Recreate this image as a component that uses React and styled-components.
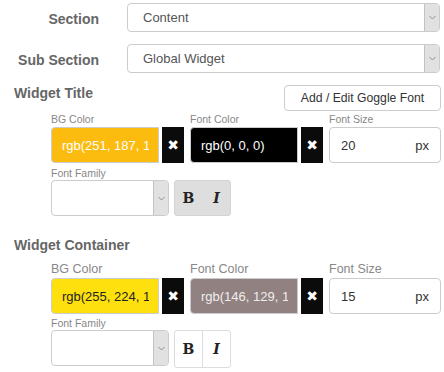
import React from 'react'
import styled, { createGlobalStyle } from 'styled-components'

const GlobalStyle = createGlobalStyle`
  body {
    margin: 0;
    background: #fff;
    font-family: "Liberation Sans", Arial, sans-serif;
  }
`

const Page = styled.div`
  width: 444px;
  padding: 3px 0 0 14px;
  box-sizing: border-box;
`

const FormRow = styled.div`
  display: grid;
  grid-template-columns: 85px 313px;
  column-gap: 28px;
  align-items: center;
  margin-bottom: 12px;
`

const RowLabel = styled.label`
  text-align: right;
  font-size: 14px;
  font-weight: bold;
  color: #666;
  padding-top: 2px;
`

const SelectBox = styled.div`
  display: flex;
  height: ${p => p.$h || 29}px;
  width: ${p => (p.$w ? p.$w + 'px' : 'auto')};
  box-sizing: border-box;
  border: 1px solid #ccc;
  border-radius: 4px;
  overflow: hidden;
  background: #fff;
`

const SelectValue = styled.div`
  flex: 1;
  padding-left: 15px;
  font-size: 13px;
  color: #555;
  display: flex;
  align-items: center;
`

const Arrow = styled.div`
  width: 14px;
  background: #e1e1e1;
  border-left: 1px solid #c2c2c2;
  display: flex;
  align-items: center;
  justify-content: center;
`

const SectionHead = styled.div`
  display: flex;
  justify-content: space-between;
  align-items: flex-start;
  width: 427px;
  margin-top: ${p => p.$top}px;
`

const SectionTitle = styled.h3`
  margin: 0;
  font-size: 14px;
  line-height: 16px;
  font-weight: bold;
  color: #666;
`

const GoogleButton = styled.button`
  width: 157px;
  height: 26px;
  border: 1px solid #ccc;
  border-radius: 4px;
  background: #fff;
  font-family: "Liberation Sans", Arial, sans-serif;
  font-size: 12.2px;
  color: #333;
  padding: 0;
`

const Fields = styled.div`
  margin-left: 37px;
  margin-top: ${p => p.$top}px;
`

const ColorGrid = styled.div`
  display: grid;
  grid-template-columns: 133px 133px 112px;
  column-gap: 6px;
`

const FieldLabel = styled.div`
  font-size: ${p => p.$size}px;
  line-height: ${p => p.$lh}px;
  color: #888;
  margin-bottom: 1px;
  white-space: nowrap;
`

const InputGroup = styled.div`
  display: flex;
  height: 36px;
`

const ColorInput = styled.input`
  flex: 1;
  min-width: 0;
  box-sizing: border-box;
  height: 36px;
  border: 1px solid #ccc;
  border-radius: 4px 0 0 4px;
  background: ${p => p.$bg};
  color: ${p => p.$fg};
  font-family: "Liberation Sans", Arial, sans-serif;
  font-size: 13px;
  padding: 0 9px 0 10px;
  outline: none;
`

const ClearButton = styled.div`
  width: 22px;
  margin-left: 3px;
  background: #0b0b0b;
  color: #fff;
  font-family: "DejaVu Sans", sans-serif;
  font-size: 14px;
  display: flex;
  align-items: center;
  justify-content: center;
`

const SizeInput = styled.div`
  height: 36px;
  box-sizing: border-box;
  border: 1px solid #ccc;
  border-radius: 4px;
  display: flex;
  align-items: center;
  justify-content: space-between;
  padding: 0 11px 0 11px;
  font-size: 13px;
  color: #333;
`

const FamilyBlock = styled.div`
  margin-top: ${p => p.$top}px;
`

const FamilyRow = styled.div`
  display: flex;
  gap: 5px;
`

const StyleGroup = styled.div`
  display: flex;
  height: ${p => p.$h}px;
  box-sizing: border-box;
  border: 1px solid ${p => (p.$active ? '#d4d4d4' : '#ddd')};
  background: ${p => (p.$active ? '#dedede' : '#fff')};
  border-radius: 3px;
`

const StyleButton = styled.div`
  width: 27px;
  display: flex;
  align-items: center;
  justify-content: center;
  font-family: "DejaVu Serif", "Liberation Serif", serif;
  font-weight: bold;
  font-style: ${p => (p.$italic ? 'italic' : 'normal')};
  font-size: 14px;
  color: #222;
  & + & {
    border-left: 1px solid ${p => (p.$active ? '#cfcfcf' : '#ddd')};
  }
`

const Chevron = () => (
  <svg width="7" height="5" viewBox="0 0 7 5">
    <path d="M0.5 1 L3.5 4 L6.5 1" fill="none" stroke="#888" strokeWidth="0.9" />
  </svg>
)

function Select({ value, w, h }) {
  return (
    <SelectBox $w={w} $h={h}>
      <SelectValue>{value}</SelectValue>
      <Arrow>
        <Chevron />
      </Arrow>
    </SelectBox>
  )
}

function WidgetFields({ labelSize, labelLh, bg, fontColor, size, active, top, familyTop }) {
  return (
    <Fields $top={top}>
      <ColorGrid>
        <div>
          <FieldLabel $size={labelSize} $lh={labelLh}>BG Color</FieldLabel>
          <InputGroup>
            <ColorInput readOnly value={bg.value} $bg={bg.bg} $fg={bg.fg} />
            <ClearButton>✖</ClearButton>
          </InputGroup>
        </div>
        <div>
          <FieldLabel $size={labelSize} $lh={labelLh}>Font Color</FieldLabel>
          <InputGroup>
            <ColorInput readOnly value={fontColor.value} $bg={fontColor.bg} $fg={fontColor.fg} />
            <ClearButton>✖</ClearButton>
          </InputGroup>
        </div>
        <div>
          <FieldLabel $size={labelSize} $lh={labelLh}>Font Size</FieldLabel>
          <SizeInput>
            <span>{size}</span>
            <span>px</span>
          </SizeInput>
        </div>
      </ColorGrid>
      <FamilyBlock $top={familyTop}>
        <FieldLabel $size={10.5} $lh={12}>Font Family</FieldLabel>
        <FamilyRow>
          <Select value="" w={118} h={36} />
          <StyleGroup $active={active} $h={active ? 36 : 38}>
            <StyleButton $active={active}>B</StyleButton>
            <StyleButton $active={active} $italic>I</StyleButton>
          </StyleGroup>
        </FamilyRow>
      </FamilyBlock>
    </Fields>
  )
}

export default function App() {
  return (
    <Page>
      <GlobalStyle />
      <FormRow>
        <RowLabel>Section</RowLabel>
        <Select value="Content" />
      </FormRow>
      <FormRow>
        <RowLabel>Sub Section</RowLabel>
        <Select value="Global Widget" />
      </FormRow>

      <SectionHead $top={2}>
        <SectionTitle>Widget Title</SectionTitle>
        <GoogleButton>Add / Edit Goggle Font</GoogleButton>
      </SectionHead>
      <WidgetFields
        top={2}
        labelSize={10.5}
        labelLh={13}
        bg={{ value: 'rgb(251, 187, 15)', bg: 'rgb(251, 187, 15)', fg: '#fff' }}
        fontColor={{ value: 'rgb(0, 0, 0)', bg: '#000', fg: '#fff' }}
        size="20"
        active
        familyTop={4}
      />

      <SectionHead $top={21}>
        <SectionTitle>Widget Container</SectionTitle>
      </SectionHead>
      <WidgetFields
        top={9}
        labelSize={12.5}
        labelLh={15}
        bg={{ value: 'rgb(255, 224, 15)', bg: 'rgb(255, 224, 15)', fg: '#222' }}
        fontColor={{ value: 'rgb(146, 129, 129)', bg: 'rgb(146, 129, 129)', fg: '#eee' }}
        size="15"
        familyTop={3}
      />
    </Page>
  )
}
